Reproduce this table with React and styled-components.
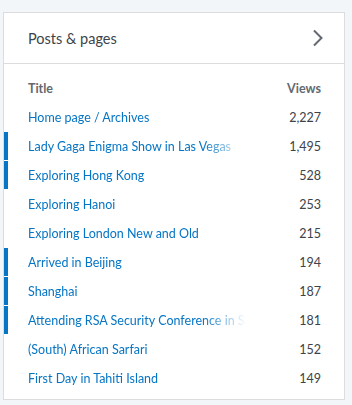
import React from "react";
import styled, { createGlobalStyle } from "styled-components";

const posts = [
  { title: "Home page / Archives", views: "2,227", marked: false },
  { title: "Lady Gaga Enigma Show in Las Vegas", views: "1,495", marked: true },
  { title: "Exploring Hong Kong", views: "528", marked: true },
  { title: "Exploring Hanoi", views: "253", marked: false },
  { title: "Exploring London New and Old", views: "215", marked: false },
  { title: "Arrived in Beijing", views: "194", marked: true },
  { title: "Shanghai", views: "187", marked: true },
  { title: "Attending RSA Security Conference in San Francisco", views: "181", marked: true },
  { title: "(South) African Sarfari", views: "152", marked: false },
  { title: "First Day in Tahiti Island", views: "149", marked: false },
];

const GlobalStyle = createGlobalStyle`
  html, body {
    margin: 0;
    background: #f3f6f8;
    font-family: "Segoe UI", Lato, "Noto Sans", sans-serif;
  }
`;

const Page = styled.div`
  padding: 12px 7px 0 3px;
  height: 405px;
  box-sizing: border-box;
  overflow: hidden;
`;

const Card = styled.section`
  background: #fff;
  border: 1px solid #dcdcde;
  border-bottom: none;
`;

const Header = styled.div`
  display: flex;
  align-items: center;
  justify-content: space-between;
  height: 50px;
  padding: 0 20px 0 24px;
  border-bottom: 1px solid #dcdcde;
  h2 {
    margin: 0;
    font-size: 14.5px;
    font-weight: 400;
    color: #3c434a;
  }
  svg {
    display: block;
  }
`;

const Table = styled.div`
  padding: 10px 0 6px;
  border-bottom: 1px solid #dcdcde;
`;

const HeadRow = styled.div`
  display: flex;
  justify-content: space-between;
  align-items: center;
  height: 29px;
  padding: 0 23px 0 24px;
  font-size: 12.5px;
  font-weight: 700;
  color: #646970;
`;

const Row = styled.div`
  position: relative;
  display: flex;
  justify-content: space-between;
  align-items: center;
  gap: 40px;
  height: 29px;
  padding: 0 23px 0 24px;
  font-size: 12.5px;
  &::before {
    content: "";
    display: ${(p) => (p.$marked ? "block" : "none")};
    position: absolute;
    left: 0;
    top: 0;
    width: 4px;
    height: 28px;
    background: #0675c4;
  }
`;

const Title = styled.a`
  flex: 0 1 218px;
  min-width: 0;
  white-space: nowrap;
  overflow: hidden;
  color: #0675c4;
  text-decoration: none;
  -webkit-mask-image: linear-gradient(to right, #000 175px, transparent 218px);
  mask-image: linear-gradient(to right, #000 175px, transparent 218px);
`;

const Views = styled.span`
  flex: none;
  color: #3c434a;
`;

const Chevron = () => (
  <svg width="12" height="18" viewBox="0 0 12 18" fill="none">
    <path d="M2 1.5l7.5 7.5L2 16.5" stroke="#646970" strokeWidth="2" />
  </svg>
);

export default function App() {
  return (
    <Page>
      <GlobalStyle />
      <Card>
        <Header>
          <h2>Posts &amp; pages</h2>
          <Chevron />
        </Header>
        <Table>
          <HeadRow>
            <span>Title</span>
            <span>Views</span>
          </HeadRow>
          {posts.map((post) => (
            <Row key={post.title} $marked={post.marked}>
              <Title href="#">{post.title}</Title>
              <Views>{post.views}</Views>
            </Row>
          ))}
        </Table>
      </Card>
    </Page>
  );
}
